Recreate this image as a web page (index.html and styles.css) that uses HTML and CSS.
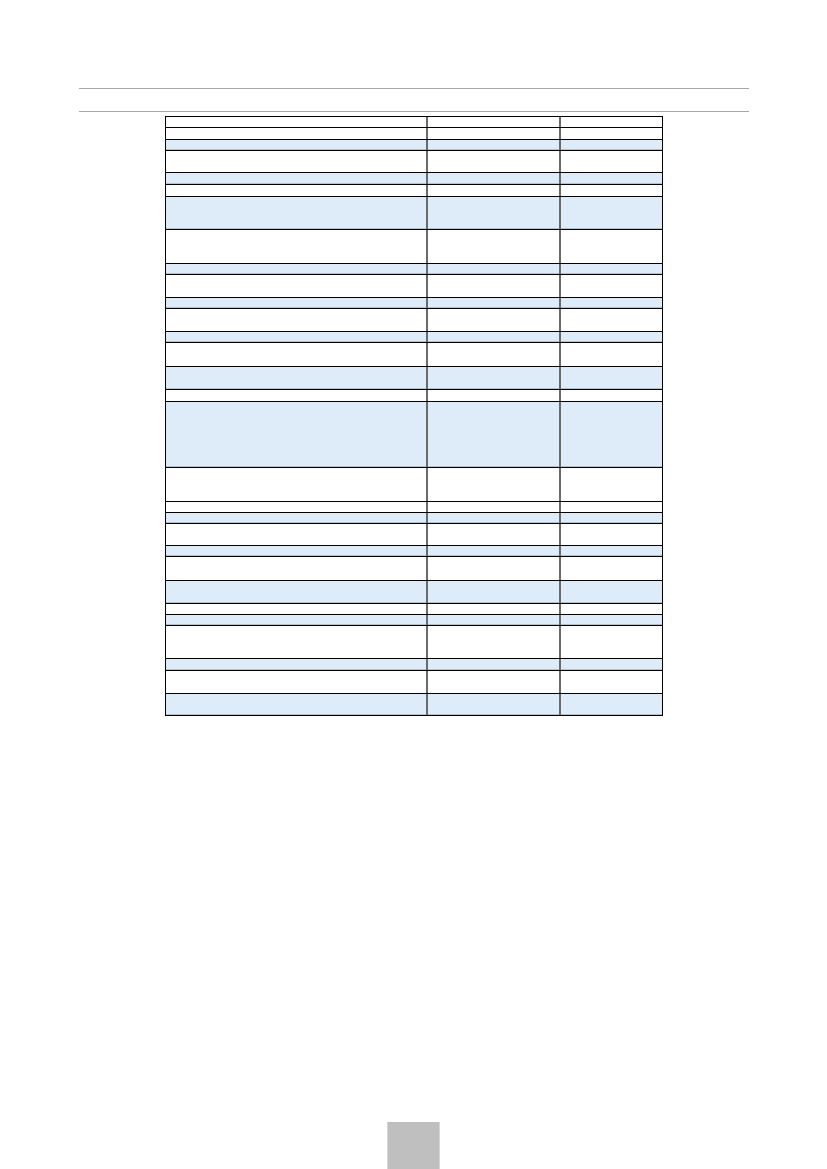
FILE: index.html
```html
<!DOCTYPE html>
<html lang="en">
<head>
<meta charset="utf-8">
<title>Table page</title>
<link rel="stylesheet" href="styles.css">
</head>
<body>
<div class="page">
  <div class="rule rule-top"></div>
  <div class="rule rule-bottom"></div>
  <div class="table">
    <div class="row h11"><div class="cell"></div><div class="cell"></div><div class="cell"></div></div>
    <div class="row h12"><div class="cell"></div><div class="cell"></div><div class="cell"></div></div>
    <div class="row blue h11"><div class="cell"></div><div class="cell"></div><div class="cell"></div></div>
    <div class="row h22"><div class="cell"></div><div class="cell"></div><div class="cell"></div></div>
    <div class="row blue h12"><div class="cell"></div><div class="cell"></div><div class="cell"></div></div>
    <div class="row h12"><div class="cell"></div><div class="cell"></div><div class="cell"></div></div>
    <div class="row blue h33"><div class="cell"></div><div class="cell"></div><div class="cell"></div></div>
    <div class="row h34"><div class="cell"></div><div class="cell"></div><div class="cell"></div></div>
    <div class="row blue h11"><div class="cell"></div><div class="cell"></div><div class="cell"></div></div>
    <div class="row h23"><div class="cell"></div><div class="cell"></div><div class="cell"></div></div>
    <div class="row blue h11"><div class="cell"></div><div class="cell"></div><div class="cell"></div></div>
    <div class="row h23"><div class="cell"></div><div class="cell"></div><div class="cell"></div></div>
    <div class="row blue h11"><div class="cell"></div><div class="cell"></div><div class="cell"></div></div>
    <div class="row h24"><div class="cell"></div><div class="cell"></div><div class="cell"></div></div>
    <div class="row blue h23"><div class="cell"></div><div class="cell"></div><div class="cell"></div></div>
    <div class="row h12"><div class="cell"></div><div class="cell"></div><div class="cell"></div></div>
    <div class="row blue h66"><div class="cell"></div><div class="cell"></div><div class="cell"></div></div>
    <div class="row h34"><div class="cell"></div><div class="cell"></div><div class="cell"></div></div>
    <div class="row h11"><div class="cell"></div><div class="cell"></div><div class="cell"></div></div>
    <div class="row blue h11"><div class="cell"></div><div class="cell"></div><div class="cell"></div></div>
    <div class="row h22"><div class="cell"></div><div class="cell"></div><div class="cell"></div></div>
    <div class="row blue h11"><div class="cell"></div><div class="cell"></div><div class="cell"></div></div>
    <div class="row h24"><div class="cell"></div><div class="cell"></div><div class="cell"></div></div>
    <div class="row blue h23"><div class="cell"></div><div class="cell"></div><div class="cell"></div></div>
    <div class="row h11"><div class="cell"></div><div class="cell"></div><div class="cell"></div></div>
    <div class="row blue h11"><div class="cell"></div><div class="cell"></div><div class="cell"></div></div>
    <div class="row h33"><div class="cell"></div><div class="cell"></div><div class="cell"></div></div>
    <div class="row blue h12"><div class="cell"></div><div class="cell"></div><div class="cell"></div></div>
    <div class="row h23"><div class="cell"></div><div class="cell"></div><div class="cell"></div></div>
    <div class="row blue last h21"><div class="cell"></div><div class="cell"></div><div class="cell"></div></div>
  </div>
  <div class="page-number"></div>
</div>
</body>
</html>
```
FILE: styles.css
```css
* {
  box-sizing: border-box;
}

html, body {
  margin: 0;
  padding: 0;
  background: #ffffff;
  font-family: "Liberation Sans", Arial, sans-serif;
}

.page {
  width: 827px;
  min-height: 1169px;
  display: flex;
  flex-direction: column;
  align-items: center;
  padding-top: 88px;
}

.rule {
  width: 670px;
  height: 1px;
  background: #a8a8a8;
}

.rule-bottom {
  margin-top: 22px;
}

.table {
  margin-top: 4px;
  width: 498px;
  border: 1px solid #000000;
  display: flex;
  flex-direction: column;
}

.row {
  display: grid;
  grid-template-columns: 260px 133px 1fr;
  border-bottom: 1px solid #000000;
  background: #ffffff;
}

.row.last {
  border-bottom: none;
}

.row.blue {
  background: #deebf8;
  box-shadow: inset 0 -1px 0 #b4c0cc;
}

.cell + .cell {
  border-left: 2px solid #6a6a6a;
}

.h11 { height: 11px; }
.h12 { height: 12px; }
.h21 { height: 21px; }
.h22 { height: 22px; }
.h23 { height: 23px; }
.h24 { height: 24px; }
.h33 { height: 33px; }
.h34 { height: 34px; }
.h66 { height: 66px; }

.page-number {
  margin-top: auto;
  width: 53px;
  height: 47px;
  background: #bfbfbf;
  border-left: 1px solid #d6d6d6;
  border-right: 1px solid #d6d6d6;
}
```
